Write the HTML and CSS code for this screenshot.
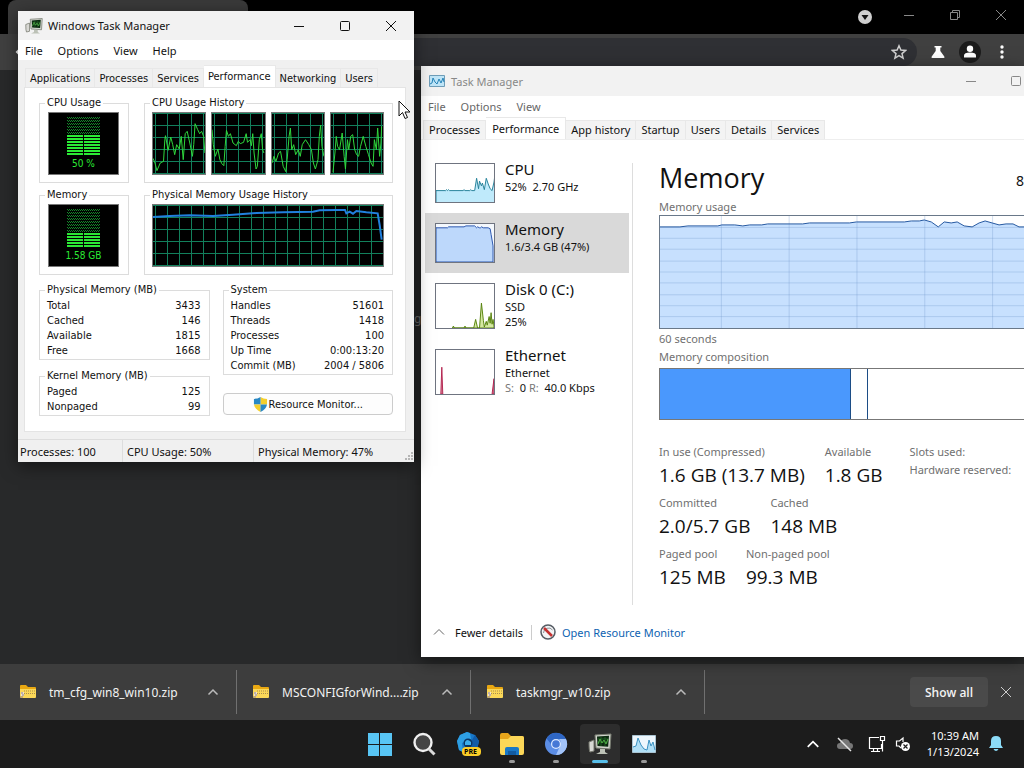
FILE: index.html
```html
<!DOCTYPE html>
<html lang="en">
<head>
  <meta charset="UTF-8">
  <meta name="viewport" content="width=device-width, initial-scale=1.0">
  <title>Task Manager</title>
  <link rel="stylesheet" href="styles.css">
</head>
<body>

  <svg class="defs" width="0" height="0" aria-hidden="true">
    <defs>
      <pattern id="dots" width="2" height="3" patternUnits="userSpaceOnUse">
        <path d="M0 0h1v1h-1zM1 1h1v1h-1z" fill="#14862a"/>
      </pattern>
      <pattern id="bars" width="17" height="3" patternUnits="userSpaceOnUse">
        <path d="M0 0h16v2h-16z" fill="#2bea35"/>
      </pattern>
      <symbol id="zip" viewBox="0 0 18 16">
        <path d="M1 2q0-1 1-1h5l2 2h7q1 0 1 1v3H1z" fill="#e9a812"/>
        <path d="M1 5h16v8q0 1-1 1H2q-1 0-1-1z" fill="#fbd858"/>
        <path d="M5 7h11M5 9.5h11" stroke="#a98d4e" stroke-dasharray="1 1"/>
        <path d="M2 8h3v4H2z" fill="#eee3d0"/>
        <path d="M2 9h2M3 11h2M1 13h3" stroke="#8c7c83"/>
      </symbol>
      <symbol id="up" viewBox="0 0 12 12">
        <path d="M1.500 8.500L6 4l4.500 4.500" fill="none" stroke="currentColor" stroke-width="1.500"/>
      </symbol>
      <symbol id="close" viewBox="0 0 12 12">
        <path d="M1 1l10 10M11 1L1 11" fill="none" stroke="currentColor"/>
      </symbol>
      <symbol id="min" viewBox="0 0 12 12">
        <path d="M1 6.500h10" fill="none" stroke="currentColor"/>
      </symbol>
      <symbol id="max" viewBox="0 0 12 12">
        <rect x="1.500" y="1.500" width="9" height="9" rx="1" fill="none" stroke="currentColor"/>
      </symbol>
      <symbol id="monitor" viewBox="0 0 24 24">
        <path d="M1 10l5-2v11l-4 1q-1-1-1-10z" fill="#d8d8d4" stroke="#77796f"/>
        <path d="M7 3l16-1-1 15-14-1z" fill="#d2d5cd" stroke="#777b70"/>
        <path d="M9 4.500l12-.8-.8 11L9.500 14z" fill="#0c2a10"/>
        <path d="M10 7h10M10 10h10M13 5v9M17 5v9" stroke="#28702c" stroke-width=".7"/>
        <path d="M10 12l2-5 2 4 2-3 2 4 2-5" fill="none" stroke="#4fae45"/>
        <path d="M12 17h5v3l3 2H8l4-2z" fill="#bcc1b6"/>
      </symbol>
      <symbol id="perf" viewBox="0 0 24 20">
        <path d="M.5 1.500h23v17H.5z" fill="#edf7fd" stroke="#aac4d2"/>
        <path d="M1 13l3-1 2-8 3 7 3 4 3 1 2-10 2 6 2-4 2 8v2H1z" fill="#b0dff6"/>
        <path d="M1 13l3-1 2-8 3 7 3 4 3 1 2-10 2 6 2-4 2 8" fill="none" stroke="#3b92c2"/>
      </symbol>
      <symbol id="perf-small" viewBox="0 0 16 14">
        <path d="M.5 1.500h15v11H.5z" fill="#bfe5f7" stroke="#6e9db8"/>
        <path d="M1 10l2-1 1-5 2 4 2 2 2-5 2 4 2-5 1 4" fill="none" stroke="#2683b8"/>
      </symbol>
    </defs>
  </svg>

  <div class="browser">
    <header class="tab-strip">
      <div class="tab"></div>
      <div class="browser-controls">
        <button aria-label="Search tabs"><svg width="16" height="16" viewBox="0 0 16 16"><circle cx="8" cy="8" r="7" fill="#cfcfcf"/><path d="M4.500 6h7L8 11z" fill="#111"/></svg></button>
        <button aria-label="Minimize"><svg width="12" height="12"><use href="#min"/></svg></button>
        <button aria-label="Restore"><svg width="12" height="12" viewBox="0 0 12 12"><path d="M1.500 3.500h7v7h-7zM3.500 3.500v-2h7v7h-2" fill="none" stroke="currentColor"/></svg></button>
        <button aria-label="Close"><svg width="12" height="12"><use href="#close"/></svg></button>
      </div>
    </header>
    <nav class="toolbar">
      <button aria-label="Back"><svg width="16" height="16" viewBox="0 0 16 16"><path d="M14 8H3M8 3L3 8l5 5" fill="none" stroke="#fff" stroke-width="2"/></svg></button>
      <div class="omnibox">
        <button aria-label="Bookmark"><svg width="16" height="16" viewBox="0 0 16 16"><path d="M8 1.800l1.900 4.300 4.700.4-3.600 3.100 1.100 4.600L8 11.700l-4.100 2.500L5 9.600 1.400 6.500l4.700-.4z" fill="none" stroke="#d0d0d0" stroke-width="1.500"/></svg></button>
      </div>
      <button aria-label="Labs"><svg width="16" height="16" viewBox="0 0 16 16"><path d="M4.500 2h7v1.500h-1.200V7l4 5.500q.8 1.500-.8 1.500h-11q-1.600 0-.8-1.500l4-5.500V3.500H4.500z" fill="#fff"/></svg></button>
      <button aria-label="Profile"><svg width="22" height="22" viewBox="0 0 22 22"><circle cx="11" cy="11" r="11" fill="#1c1c1c"/><circle cx="11" cy="7.800" r="3.200" fill="#fff"/><path d="M5 16.500v-2q0-3 6-3t6 3v2z" fill="#fff"/></svg></button>
      <button aria-label="Menu"><svg width="16" height="16" viewBox="0 0 16 16"><path d="M8 3v.1M8 8v.1M8 13v.1" stroke="#fff" stroke-width="3.400" stroke-linecap="round"/></svg></button>
    </nav>
    <main class="page"><span class="page-text">g</span></main>
    <footer class="downloads">
      <div class="download"><svg width="18" height="16"><use href="#zip"/></svg><a href="#">tm_cfg_win8_win10.zip</a><button aria-label="More"><svg width="12" height="12"><use href="#up"/></svg></button></div>
      <div class="download"><svg width="18" height="16"><use href="#zip"/></svg><a href="#">MSCONFIGforWind....zip</a><button aria-label="More"><svg width="12" height="12"><use href="#up"/></svg></button></div>
      <div class="download"><svg width="18" height="16"><use href="#zip"/></svg><a href="#">taskmgr_w10.zip</a><button aria-label="More"><svg width="12" height="12"><use href="#up"/></svg></button></div>
      <button class="show-all">Show all</button>
      <button class="dismiss" aria-label="Close"><svg width="12" height="12"><use href="#close"/></svg></button>
    </footer>
  </div>

  <!-- Windows 10 task manager -->
  <section class="window win10">
    <header class="title-bar">
      <svg width="16" height="14"><use href="#perf-small"/></svg>
      <h1>Task Manager</h1>
      <button aria-label="Minimize"><svg width="12" height="12"><use href="#min"/></svg></button>
      <button aria-label="Maximize"><svg width="12" height="12"><use href="#max"/></svg></button>
    </header>
    <nav class="menu"><button>File</button><button>Options</button><button>View</button></nav>
    <nav class="tabs">
      <button>Processes</button><button class="active">Performance</button><button>App history</button><button>Startup</button><button>Users</button><button>Details</button><button>Services</button>
    </nav>
    <div class="perf">
      <ul class="resources">
        <li>
          <svg class="thumb" viewBox="0 0 60 40" preserveAspectRatio="none"><path d="M0 28h10l1-1 1 1 1-1 1 1h14l1-1 1 1h5l1-1 1 1h3l2-13 2 11 1-8 2 5 1-3 2 7 2-12 2 6 2 5 2 2 2-9 1-8 1 7 1-4v27H0z" fill="#bfeafb" stroke="#237f98"/></svg>
          <div><h2>CPU</h2><p>52%&nbsp; 2.70 GHz</p></div>
        </li>
        <li class="selected">
          <svg class="thumb" viewBox="0 0 60 40" preserveAspectRatio="none"><path d="M0 0h60v40H0z" fill="#f4f8fd"/><path d="M0 4h12l1-1h16l2-1h9l2 2 1-1 2 1h1l1-1 2 1h5l2 1 1 6 2 12v17H0z" fill="#bdd8fb" stroke="#2753ad"/></svg>
          <div><h2>Memory</h2><p>1.6/3.4 GB (47%)</p></div>
        </li>
        <li class="tall">
          <svg class="thumb" viewBox="0 0 60 46" preserveAspectRatio="none"><path d="M17 46l1-2 1 2h10l1-2 1 2h8l2-9 2 9h2l2-26 2 18 1 7 2-6 1 4 2-9 1 7 1-11 1 12 1-5 1 7v2z" fill="#d5e8a3" stroke="#56820c"/></svg>
          <div><h2>Disk 0 (C:)</h2><p>SSD</p><p>25%</p></div>
        </li>
        <li class="tall">
          <svg class="thumb" viewBox="0 0 60 46" preserveAspectRatio="none"><path d="M5 46l1-28 1 28zM58 46l2-16v16z" fill="#d88a9c" stroke="#b32450"/></svg>
          <div><h2>Ethernet</h2><p>Ethernet</p><p><span class="muted">S:</span>&nbsp; 0 <span class="muted">R:</span>&nbsp; 40.0 Kbps</p></div>
        </li>
      </ul>
      <div class="detail">
        <div class="detail-head"><h2>Memory</h2><span>8</span></div>
        <p class="caption">Memory usage</p>
        <svg class="usage" viewBox="0 0 365 113" preserveAspectRatio="none">
          <path d="M0 11h20l8-1h30l4-1h13l8 1 7-1h12l6-1h35l7-1h40l7-1h48l7-1h8l5-1 7 2 7 5 6-5 7 1 6-1 7 4 8 1 7-4 6-2 7 2 7 2 7-1h7l6 3h10V114H0z" fill="#c7e0fe"/>
          <path d="M0 11.500h370M0 22.500h370M0 33.500h370M0 45.500h370M0 56.500h370M0 67.500h370M0 79.500h370M0 90.500h370M0 101.500h370M61.500 0v113M129.500 0v113M197.500 0v113M265.500 0v113M333.500 0v113" fill="none" stroke="#7098c8" stroke-opacity=".32"/>
          <path d="M0 11h20l8-1h30l4-1h13l8 1 7-1h12l6-1h35l7-1h40l7-1h48l7-1h8l5-1 7 2 7 5 6-5 7 1 6-1 7 4 8 1 7-4 6-2 7 2 7 2 7-1h7l6 3h10" fill="none" stroke="#2458a0"/>
        </svg>
        <p class="caption">60 seconds</p>
        <p class="caption">Memory composition</p>
        <div class="composition"><div class="in-use"></div><div class="modified"></div></div>
        <div class="stats">
          <div>
            <dl class="row"><div><dt>In use (Compressed)</dt><dd>1.6 GB (13.7 MB)</dd></div><div><dt>Available</dt><dd>1.8 GB</dd></div></dl>
            <dl class="row"><div><dt>Committed</dt><dd>2.0/5.7 GB</dd></div><div><dt>Cached</dt><dd>148 MB</dd></div></dl>
            <dl class="row"><div><dt>Paged pool</dt><dd>125 MB</dd></div><div><dt>Non-paged pool</dt><dd>99.3 MB</dd></div></dl>
          </div>
          <div class="hardware"><p>Slots used:</p><p>Hardware reserved:</p></div>
        </div>
      </div>
    </div>
    <footer class="details-bar">
      <button><svg width="12" height="12" viewBox="0 0 12 12"><path d="M1 8.500l5-5 5 5" fill="none" stroke="#666"/></svg>Fewer details</button>
      <a href="#"><svg width="16" height="16" viewBox="0 0 16 16"><circle cx="8" cy="8" r="7" fill="#f3f4f5" stroke="#555c64" stroke-width="1.500"/><path d="M3.500 9a5 5 0 0 1 9-3" fill="none" stroke="#8b9299"/><path d="M4 4l8 8" stroke="#c43131" stroke-width="2.500"/></svg>Open Resource Monitor</a>
    </footer>
  </section>

  <!-- Windows 7 task manager -->
  <section class="window win7">
    <header class="title-bar">
      <svg width="18" height="18"><use href="#monitor"/></svg>
      <h1>Windows Task Manager</h1>
      <button aria-label="Minimize"><svg width="12" height="12"><use href="#min"/></svg></button>
      <button aria-label="Maximize"><svg width="12" height="12"><use href="#max"/></svg></button>
      <button aria-label="Close"><svg width="12" height="12"><use href="#close"/></svg></button>
    </header>
    <nav class="menu"><button>File</button><button>Options</button><button>View</button><button>Help</button></nav>
    <nav class="tabs">
      <button>Applications</button><button>Processes</button><button>Services</button><button class="active">Performance</button><button>Networking</button><button>Users</button>
    </nav>
    <div class="panel">
      <div class="meters">
        <fieldset>
          <legend>CPU Usage</legend>
          <div class="meter"><svg width="33" height="39"><rect width="33" height="18" fill="url(#dots)"/><rect y="18" width="33" height="21" fill="url(#bars)"/></svg><span>50 %</span></div>
        </fieldset>
        <fieldset>
          <legend>CPU Usage History</legend>
          <div class="graphs">
            <svg class="graph" viewBox="0 0 159 183" preserveAspectRatio="none"><polyline points="0,136 6,150 12,173 22,150 32,145 36,80 38,68 46,112 54,72 60,95 66,125 72,95 80,108 86,70 92,140 98,62 104,55 112,90 120,130 124,95 128,32 136,50 142,62 148,55 154,70 158,120"/></svg>
            <svg class="graph" viewBox="0 0 159 183" preserveAspectRatio="none"><polyline points="0,50 4,95 10,130 18,108 24,140 30,152 36,158 40,100 44,52 50,70 56,62 64,90 74,98 80,85 86,92 96,88 104,62 108,88 116,80 120,98 124,62 128,120 134,168 138,160 144,80 150,62 154,110 158,120"/></svg>
            <svg class="graph" viewBox="0 0 159 183" preserveAspectRatio="none"><polyline points="0,150 6,130 12,145 20,120 26,115 34,160 42,176 46,140 52,70 56,45 60,110 66,95 72,125 80,110 86,130 92,95 102,80 112,95 120,110 126,150 132,168 140,140 144,70 148,36 152,100 158,130"/></svg>
            <svg class="graph" viewBox="0 0 159 183" preserveAspectRatio="none"><polyline points="6,178 12,120 16,70 20,100 26,110 34,60 40,130 44,168 50,80 54,110 60,70 66,65 72,110 78,125 84,130 90,100 98,70 106,100 114,125 122,150 128,160 132,80 138,110 142,45 148,130 152,90 154,40"/></svg>
          </div>
        </fieldset>
        <fieldset>
          <legend>Memory</legend>
          <div class="meter"><svg width="33" height="39"><rect width="33" height="24" fill="url(#dots)"/><rect y="24" width="33" height="15" fill="url(#bars)"/></svg><span>1.58 GB</span></div>
        </fieldset>
        <fieldset>
          <legend>Physical Memory Usage History</legend>
          <div class="graphs">
            <svg class="graph memory" viewBox="0 0 690 183" preserveAspectRatio="none"><polyline points="0,36 50,33 110,31 180,33 240,29 310,24 390,22 480,20 500,16 550,15 576,15 580,25 590,20 600,26 610,18 640,22 674,25 680,60 686,104"/></svg>
          </div>
        </fieldset>
      </div>
      <div class="totals">
        <div>
          <fieldset>
            <legend>Physical Memory (MB)</legend>
            <table>
              <tr><th>Total</th><td>3433</td></tr>
              <tr><th>Cached</th><td>146</td></tr>
              <tr><th>Available</th><td>1815</td></tr>
              <tr><th>Free</th><td>1668</td></tr>
            </table>
          </fieldset>
          <fieldset>
            <legend>Kernel Memory (MB)</legend>
            <table>
              <tr><th>Paged</th><td>125</td></tr>
              <tr><th>Nonpaged</th><td>99</td></tr>
            </table>
          </fieldset>
        </div>
        <div>
          <fieldset>
            <legend>System</legend>
            <table>
              <tr><th>Handles</th><td>51601</td></tr>
              <tr><th>Threads</th><td>1418</td></tr>
              <tr><th>Processes</th><td>100</td></tr>
              <tr><th>Up Time</th><td>0:00:13:20</td></tr>
              <tr><th>Commit (MB)</th><td>2004 / 5806</td></tr>
            </table>
          </fieldset>
          <button class="monitor-button"><svg width="15" height="15" viewBox="0 0 16 16"><path d="M8 0q3 2 7 2v6H8z" fill="#f5cf2c"/><path d="M8 0Q5 2 1 2v6h7z" fill="#2988c4"/><path d="M1 8q1 5 7 8V8z" fill="#f5cf2c"/><path d="M15 8q-1 5-7 8V8z" fill="#2988c4"/></svg>Resource Monitor...</button>
        </div>
      </div>
    </div>
    <footer class="status"><span>Processes: 100</span><span>CPU Usage: 50%</span><span>Physical Memory: 47%</span><svg width="10" height="10" viewBox="0 0 10 10"><path d="M7 1h2M4 4h2M7 4h2M1 7h2M4 7h2M7 7h2" stroke="#b5b5b5" stroke-width="2"/></svg></footer>
  </section>

  <footer class="taskbar">
    <div class="apps">
      <button aria-label="Start"><svg width="24" height="24" viewBox="0 0 24 24"><path d="M0 1h11v11H0zM12 1h12v11H12zM0 13h11v11H0zM12 13h12v11H12z" fill="#58c5f4"/></svg></button>
      <button aria-label="Search"><svg width="24" height="24" viewBox="0 0 24 24"><circle cx="11" cy="10.500" r="8.500" fill="#454545" stroke="#f0f0f0" stroke-width="2.400"/><path d="M17 17l5.500 5.500" stroke="#d9d9d9" stroke-width="3"/></svg></button>
      <button aria-label="Program"><svg width="26" height="26" viewBox="0 0 26 26"><path d="M12 1l8 3 4 6-2 9-9 5-9-5-2-9 3-6z" fill="#1777c8"/><path d="M12 1L5 4l-3 6 2 9 4 2-1-9 9-4-1-6z" fill="#2e9fe3"/><path d="M20 4l4 6-2 9-5 3-1-7 1-6z" fill="#105ba7"/><circle cx="13" cy="12" r="4.500" fill="#0b3564"/><path d="M10 11q2-4 6 0v3h-6z" fill="#3baeec"/><rect x="7" y="16" width="19" height="9" rx="4" fill="#fbce28"/><text x="9" y="23" font-size="7" font-weight="700" font-family="Open Sans, sans-serif">PRE</text></svg></button>
      <button class="open" aria-label="File Explorer"><svg width="26" height="24" viewBox="0 0 26 24"><path d="M1 3q0-2 2-2h6l3 3h11q2 0 2 2v6H1z" fill="#e7a51b"/><path d="M1 7h8l3-3h11q2 0 2 2v15q0 2-2 2H3q-2 0-2-2z" fill="#fcd758"/><path d="M6 23v-6q0-2 2-2h10q2 0 2 2v6z" fill="#1978c7"/><path d="M9 19h8v4H9z" fill="#125ba1"/></svg></button>
      <button class="open" aria-label="Chromium"><svg width="24" height="24" viewBox="0 0 24 24"><circle cx="12" cy="12" r="11" fill="#5b8de5"/><path d="M2.500 6.500A11 11 0 0 1 22 7H12a5 5 0 0 0-5 5z" fill="#2f67c5"/><path d="M22 7a11 11 0 0 1-10 16l4-9a5 5 0 0 0-1-7z" fill="#a2c3f8"/><circle cx="12" cy="12" r="5" fill="#dce9ff"/><circle cx="12" cy="12" r="3.800" fill="#4678d6"/></svg></button>
      <button class="open current" aria-label="Windows Task Manager"><svg width="24" height="24"><use href="#monitor"/></svg></button>
      <button class="open" aria-label="Task Manager"><svg width="24" height="20"><use href="#perf"/></svg></button>
    </div>
    <div class="tray">
      <button aria-label="Hidden icons"><svg width="14" height="14"><use href="#up"/></svg></button>
      <button aria-label="Cloud"><svg width="18" height="16" viewBox="0 0 18 16"><path d="M4 13q-3 0-3-3t3-3q1-4 5-4t5 4q3 0 3 3t-3 3z" fill="#777"/><path d="M2 2l13 13" stroke="#e6e6e6" stroke-width="1.500"/></svg></button>
      <button aria-label="Network"><svg width="18" height="18" viewBox="0 0 18 18"><path d="M11 2.500H1.500v11h12V9M5.500 13.500V16M3 16.500h9M9.500 13.500V16" fill="none" stroke="#fff" stroke-width="1.200"/><path d="M12.500 1.500h4v4h-4zM14.500 5.500v11" fill="none" stroke="#fff" stroke-width="1.200"/></svg></button>
      <button aria-label="Sound"><svg width="16" height="16" viewBox="0 0 16 16"><path d="M8 6V2L4.500 5H1.500v5h2.500l2 2" fill="none" stroke="#fff" stroke-width="1.200"/><circle cx="10.500" cy="10.500" r="4.500" fill="#fff"/><path d="M8.500 8.500l4 4M12.500 8.500l-4 4" stroke="#1c1c1c" stroke-width="1.200"/></svg></button>
      <button class="clock"><span>10:39 AM</span><span>1/13/2024</span></button>
      <button aria-label="Notifications"><svg width="16" height="16" viewBox="0 0 16 16"><path d="M8 0q5 0 5 5v4l2 3H1l2-3V5q0-5 5-5zM5.500 13h5q-1 2-2.500 2t-2.500-2z" fill="#8cdcf8"/></svg></button>
    </div>
  </footer>

  <svg class="cursor" width="14" height="21" viewBox="0 0 14 21"><path d="M1 1v15l3.500-3.500L7 18.500l2.500-1L7 12h5z" fill="#fff" stroke="#111"/></svg>

</body>
</html>
```
FILE: styles.css
```css
* {
  box-sizing: border-box;
}

body {
  display: flex;
  flex-direction: column;
  height: 100vh;
  margin: 0;
  overflow: hidden;
  position: relative;
  background: #28292a;
  font-family: 'Noto Sans', sans-serif;
  font-size: 12px;
  color: #111;
}

h1, h2, p, ul, dl, dd, fieldset, legend {
  margin: 0;
  padding: 0;
  font-weight: normal;
}

button {
  border: 0;
  padding: 0;
  background: none;
  font: inherit;
  color: inherit;
}

a {
  color: inherit;
  text-decoration: none;
}

svg {
  display: block;
  flex-shrink: 0;
}

.defs {
  position: absolute;
}

/* Browser */
.browser {
  flex: 1;
  display: flex;
  flex-direction: column;
}

.tab-strip {
  display: flex;
  justify-content: space-between;
  height: 34px;
  padding-left: 8px;
  background: #000;
  color: #888;
}

.tab {
  width: 240px;
  background: #3a3a3a;
  border-radius: 8px 8px 0 0;
}

.browser-controls {
  display: flex;
  align-items: center;
  gap: 34px;
  height: 30px;
  padding-right: 17px;
}

.browser-controls button:first-child {
  margin: 3px -4px 0 0;
}

.toolbar {
  display: flex;
  align-items: center;
  gap: 13px;
  height: 36px;
  padding: 0 14px;
  background: #404040;
}

.omnibox {
  flex: 1;
  display: flex;
  justify-content: flex-end;
  align-items: center;
  height: 28px;
  padding-right: 10px;
  border-radius: 14px;
  background: #2f3034;
}

.page {
  flex: 1;
}

.page-text {
  display: block;
  padding: 240px 0 0 414px;
  color: #777;
}

.downloads {
  display: flex;
  align-items: center;
  height: 56px;
  padding-right: 12px;
  background: #3d3d3d;
  color: #f2f2f2;
}

.download {
  display: flex;
  align-items: center;
  gap: 12px;
  width: 234px;
  height: 44px;
  padding: 0 17px 0 15px;
  border-right: 1px solid #707070;
}

.download:first-child {
  width: 237px;
  padding-left: 19px;
}

.download button {
  margin-left: auto;
  color: #bbb;
}

.show-all {
  margin-left: auto;
  width: 78px;
  height: 30px;
  border-radius: 4px;
  background: #4a4a4a;
  font-family: 'Open Sans', sans-serif;
  font-weight: 600;
}

.dismiss {
  margin-left: 12px;
  color: #ccc;
}

/* Shared window parts */
.window {
  position: absolute;
  display: flex;
  flex-direction: column;
  box-shadow: 0 4px 16px rgba(0,0,0,0.5);
  font-size: 11px;
}

.title-bar {
  display: flex;
  align-items: center;
  background: #f2f2f2;
}

.title-bar h1 {
  flex: 1;
  font-size: 11px;
}

.menu {
  display: flex;
  background: #fff;
}

.tabs {
  display: flex;
  align-items: flex-end;
}

.tabs button {
  border: 1px solid #e8e8e8;
  border-bottom: 0;
  white-space: nowrap;
}

.tabs button + button {
  border-left: 0;
}

/* Windows 10 */
.win10 {
  top: 66px;
  left: 421px;
  right: 0;
  height: 591px;
  background: #fff;
}

.win10 .title-bar {
  height: 30px;
  padding: 0 2px 0 8px;
  gap: 6px;
  color: #888;
}

.win10 .title-bar button + button {
  margin-left: 27px;
}

.win10 .menu {
  height: 20px;
  padding-left: 7px;
  gap: 15px;
  color: #666;
}

.win10 .tabs {
  height: 24px;
  padding-left: 2px;
  border-bottom: 1px solid #eee;
}

.win10 .tabs button {
  height: 19px;
  padding: 0 5px;
  background: #f3f3f3;
  line-height: 18px;
}

.win10 .tabs .active {
  height: 22px;
  padding: 0 6px;
  background: #fff;
}

.perf {
  flex: 1;
  display: flex;
}

.resources {
  width: 211px;
  padding: 13px 3px 0 4px;
  list-style: none;
}

.resources li {
  display: flex;
  gap: 10px;
  height: 60px;
  padding: 10px;
  white-space: nowrap;
}

.resources .tall {
  height: 66px;
}

.resources .selected {
  background: #d9d9d9;
}

.resources li > div {
  margin-top: -4px;
}

.resources h2 {
  font-size: 15px;
  line-height: 20px;
}

.resources p {
  line-height: 15px;
}

.muted {
  color: #777;
}

.thumb {
  width: 60px;
  height: 100%;
  border: 1px solid #6f7480;
}

.detail {
  flex: 1;
  min-width: 0;
  margin: 23px 0 0;
  padding-left: 26px;
  height: 442px;
  border-left: 1px solid #ddd;
}

.detail-head {
  display: flex;
  align-items: center;
  justify-content: space-between;
  height: 34px;
}

.detail-head h2 {
  height: 34px;
  font-family: 'Open Sans', sans-serif;
  font-size: 27px;
  line-height: 30px;
}

.detail-head span {
  font-size: 14px;
}

.caption {
  height: 18px;
  color: #707070;
  line-height: 19px;
}

.usage {
  width: 100%;
  height: 114px;
  border: 1px solid #697889;
  border-right: 0;
}

.composition {
  display: flex;
  height: 52px;
  margin-top: 3px;
  border: 1px solid #777;
  border-right: 0;
}

.in-use {
  width: 191px;
  background: #4a98fd;
  border-right: 1px solid #1c4d86;
}

.modified {
  width: 17px;
  border-right: 1px solid #1c4d86;
}

.stats {
  display: flex;
  gap: 27px;
  margin-top: 23px;
  color: #707070;
  white-space: nowrap;
}

.row {
  display: flex;
  gap: 20px;
  height: 51px;
}

.row dt {
  line-height: 18px;
}

.row dd {
  color: #111;
  font-family: 'Open Sans', sans-serif;
  font-size: 19px;
  line-height: 28px;
}

.hardware p {
  line-height: 18px;
}

.details-bar {
  display: flex;
  align-items: center;
  height: 50px;
  padding-left: 12px;
}

.details-bar button,
.details-bar a {
  display: flex;
  align-items: center;
  gap: 10px;
}

.details-bar button {
  padding-right: 8px;
  border-right: 1px solid #ccc;
}

.details-bar a {
  gap: 6px;
  padding-left: 8px;
  color: #0d62b1;
}

/* Windows 7 */
.win7 {
  top: 11px;
  left: 18px;
  width: 396px;
  background: #f0f0f0;
}

.win7 .title-bar {
  height: 29px;
  padding: 0 17px 0 7px;
  gap: 5px;
}

.win7 .title-bar button + button {
  margin-left: 29px;
}

.win7 .menu {
  height: 20px;
  padding-left: 7px;
  gap: 15px;
}

.win7 .tabs {
  height: 27px;
  padding-left: 7px;
  font-family: 'DejaVu Sans Condensed', sans-serif;
}

.win7 .tabs button {
  height: 19px;
  padding: 0 4px;
  line-height: 20px;
}

.win7 .tabs .active {
  height: 22px;
  background: #fff;
}

.panel {
  margin: 0 8px 7px 6px;
  padding: 8px 12px 15px 14px;
  border: 1px solid #e4e4e4;
  background: #fff;
  font-family: 'DejaVu Sans Condensed', sans-serif;
}

fieldset {
  min-width: 0;
  border: 1px solid #dcdcdc;
}

.win7 legend {
  margin-left: 5px;
  padding: 0 2px;
  line-height: 14px;
}

.meters {
  display: grid;
  grid-template-columns: 90px 1fr;
  gap: 5px 15px;
}

.meters fieldset {
  height: 87px;
}

.meter {
  display: flex;
  flex-direction: column;
  align-items: center;
  height: 63px;
  margin: 2px 9px 0 8px;
  padding-top: 4px;
  border: 1px solid #777;
  background: #000;
  color: #2bea35;
  font-size: 10px;
  line-height: 16px;
}

.graphs {
  display: flex;
  gap: 5px;
  margin: 2px 8px 0 7px;
}

.graph {
  flex: 1;
  min-width: 0;
  height: 63px;
  border: 1px solid #777;
  background-color: #000;
  background-image:
    linear-gradient(#12805c 1px, transparent 1px),
    linear-gradient(90deg, #12805c 1px, transparent 1px);
  background-size: 12px 12px;
  background-position: 2px 0;
}

.graph polyline {
  fill: none;
  stroke: #2fd83c;
  vector-effect: non-scaling-stroke;
}

.memory polyline {
  stroke: #2180df;
  stroke-width: 2px;
}

.totals {
  display: grid;
  grid-template-columns: 1fr 1fr;
  gap: 13px;
  margin-top: 8px;
}

.totals table {
  width: 100%;
  padding: 1px 8px 1px 7px;
  border-spacing: 0;
  line-height: 15px;
}

.totals th {
  padding: 0;
  font-weight: normal;
  text-align: left;
}

.totals td {
  padding: 0;
  text-align: right;
}

.totals fieldset + fieldset {
  margin-top: 9px;
}

.monitor-button {
  display: flex;
  align-items: center;
  justify-content: center;
  gap: 1px;
  width: 100%;
  height: 22px;
  margin-top: 18px;
  border: 1px solid #ccc;
  border-radius: 4px;
  background: #fdfdfd;
}

.status {
  display: flex;
  height: 23px;
  border-top: 1px solid #ddd;
  line-height: 24px;
}

.status span {
  width: 131px;
  padding-left: 4px;
  border-right: 1px solid #ddd;
}

.status span:first-child {
  width: 105px;
  padding-left: 2px;
}

.status span:last-of-type {
  flex: 1;
  border: 0;
}

.status svg {
  align-self: flex-end;
}

/* Taskbar */
.taskbar {
  display: grid;
  grid-template-columns: 1fr auto 1fr;
  align-items: center;
  height: 48px;
  background: #1c1c1c;
  color: #fff;
}

.apps {
  grid-column: 2;
  display: flex;
  gap: 4px;
}

.apps button {
  display: grid;
  place-items: center;
  position: relative;
  width: 40px;
  height: 40px;
  border-radius: 4px;
}

.apps .current {
  background: #2d2d2d;
}

.apps .open::after {
  content: "";
  position: absolute;
  bottom: 1px;
  width: 6px;
  height: 3px;
  border-radius: 2px;
  background: #9a9a9a;
}

.apps .current::after {
  width: 16px;
  background: #58bfea;
}

.tray {
  display: flex;
  justify-content: flex-end;
  align-items: center;
  gap: 9px;
  padding-right: 20px;
}

.tray button:first-child {
  margin-right: 7px;
}

.tray button:nth-child(2) {
  margin-right: 5px;
}

.clock {
  display: flex;
  flex-direction: column;
  margin-left: 7px;
  text-align: right;
  font-size: 11px;
  line-height: 16px;
}

.cursor {
  position: absolute;
  top: 100px;
  left: 398px;
}
```
